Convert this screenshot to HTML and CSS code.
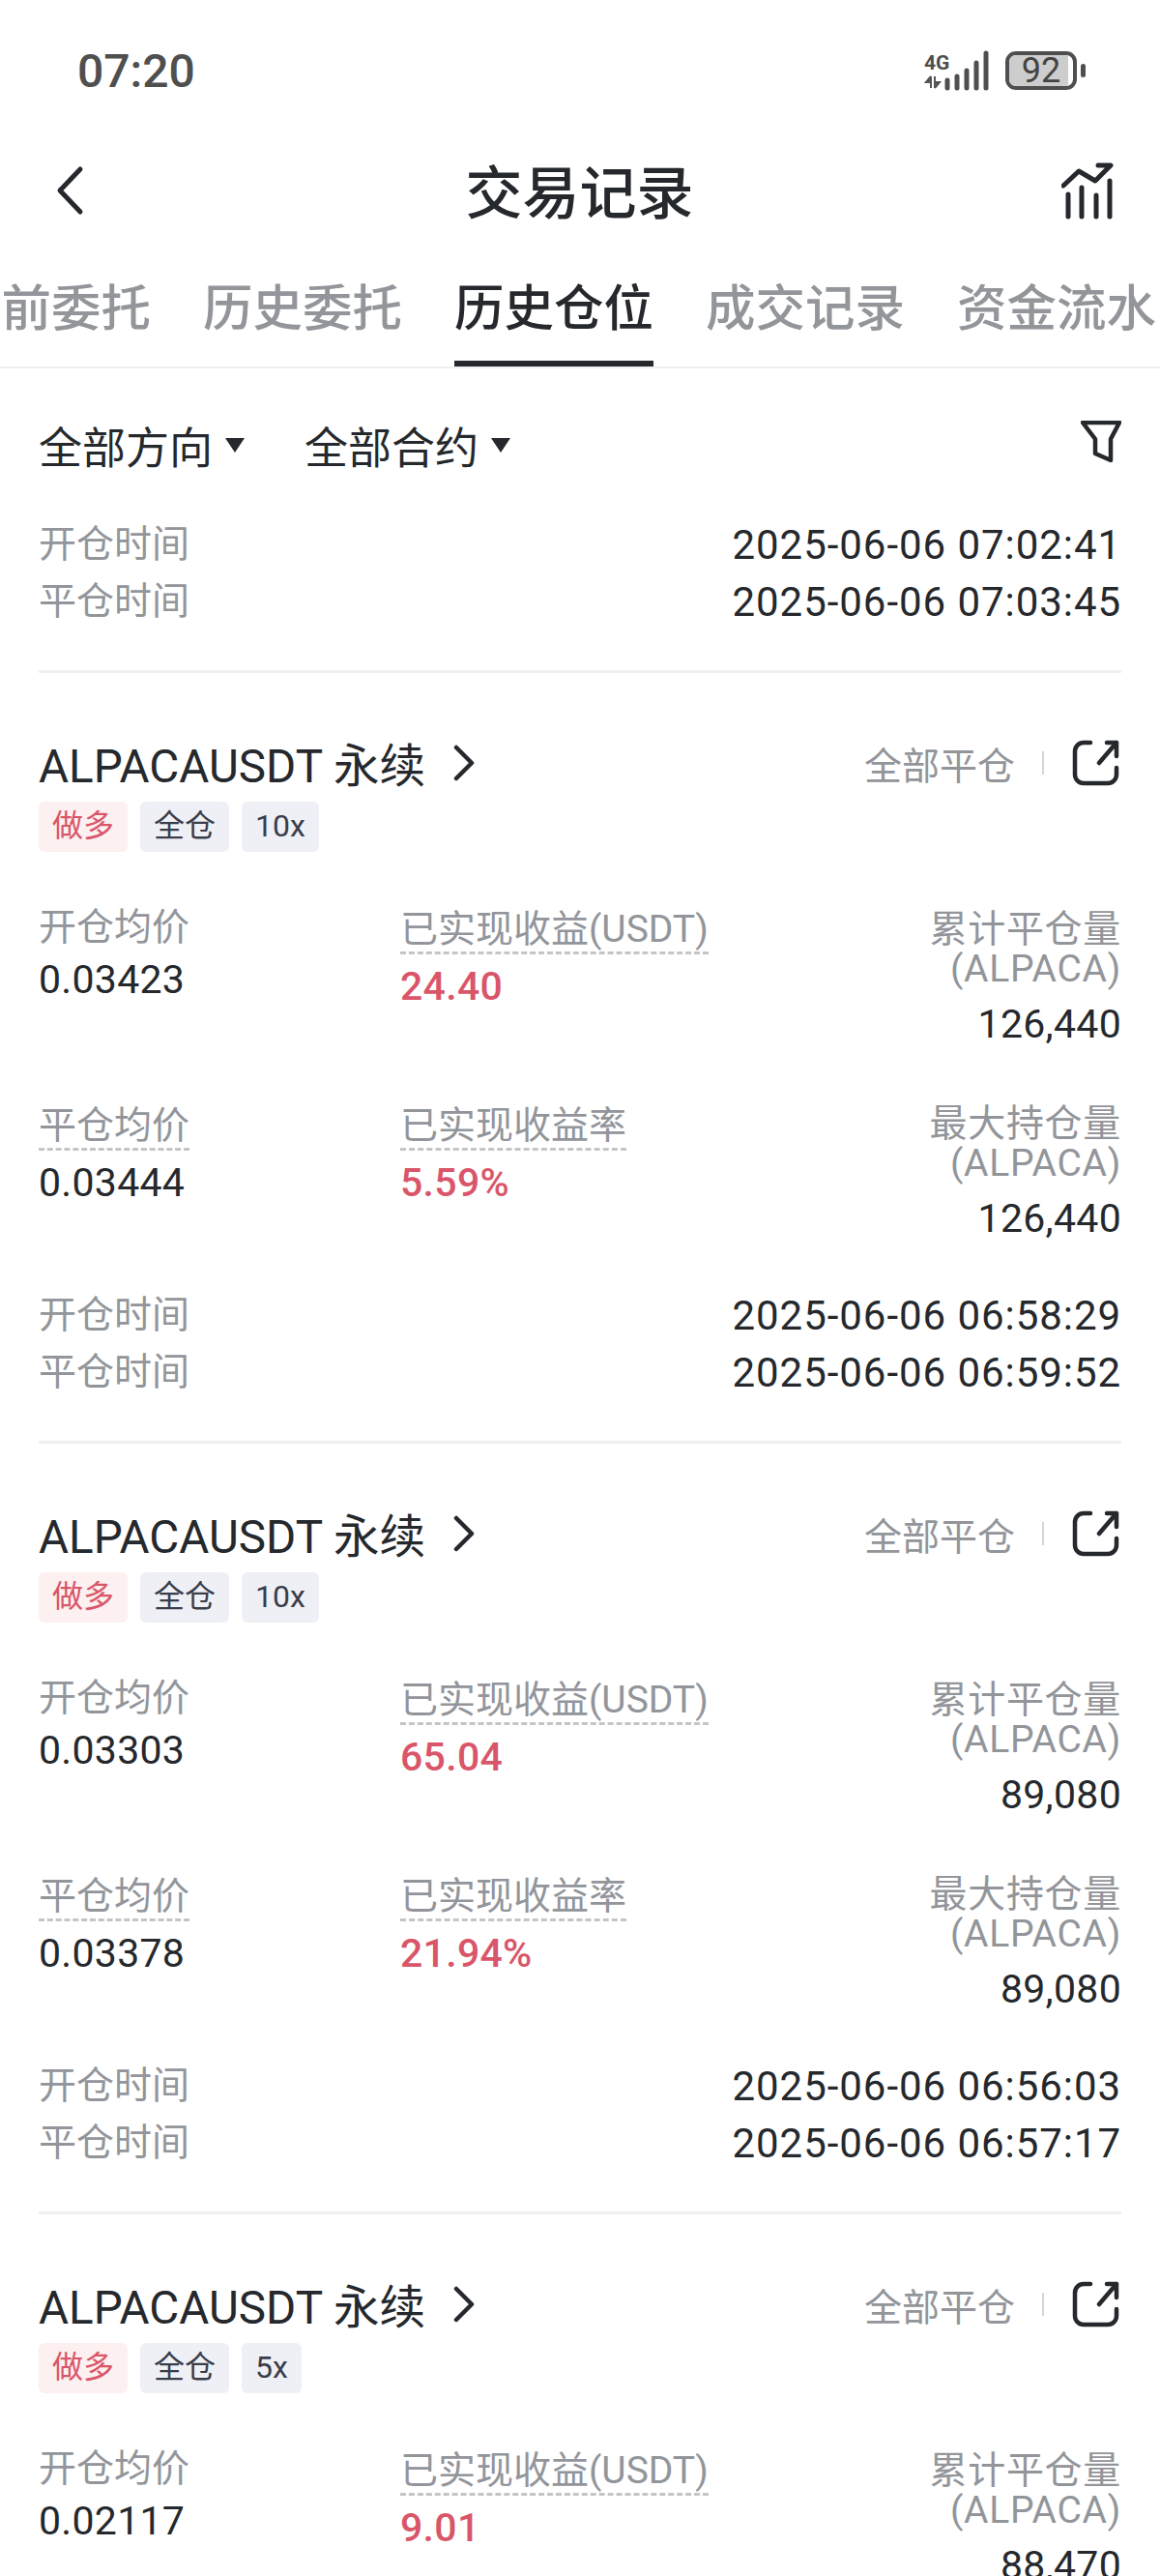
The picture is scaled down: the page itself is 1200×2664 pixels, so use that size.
FILE: index.html
```html
<!DOCTYPE html>
<html lang="zh-CN">
<head>
    <meta charset="UTF-8">
    <title>交易记录</title>
    <link rel="stylesheet" href="styles.css">
</head>
<body>
    <div class="page">
        <div class="statusbar">
            <span class="clock">07:20</span>
            <div class="status-icons">
                <svg class="signal" width="68" height="42" viewBox="0 0 68 42">
                    <text x="0" y="20" class="net">4G</text>
                    <path d="M7 27v12M7 27l-5 6h5M11 27v12M11 39l5-6h-5" fill="#555" stroke="#555" stroke-width="2"/>
                    <g stroke="#4f4f4f" stroke-width="5" stroke-linecap="round">
                        <line x1="24" y1="31" x2="24" y2="39"/>
                        <line x1="34" y1="27" x2="34" y2="39"/>
                        <line x1="44" y1="21" x2="44" y2="39"/>
                        <line x1="54" y1="13" x2="54" y2="39"/>
                        <line x1="64" y1="3" x2="64" y2="39"/>
                    </g>
                </svg>
                <div class="battery"><div class="battery-body"><span class="battery-fill"></span><span class="battery-num">92</span></div><span class="battery-tip"></span></div>
            </div>
        </div>

        <header class="topbar">
            <svg class="back" width="34" height="52" viewBox="0 0 34 52"><path d="M28 4 L7 26 L28 48" fill="none" stroke="#25282c" stroke-width="5" stroke-linecap="round" stroke-linejoin="round"/></svg>
            <h1>交易记录</h1>
            <svg class="chart" width="56" height="60" viewBox="0 0 56 60">
                <g fill="none" stroke="#25282c" stroke-width="5" stroke-linecap="round" stroke-linejoin="round">
                    <path d="M2 24 L18 9 L35 19 L51 3 H38"/>
                    <path d="M7 33V56M21 26V56M36 34V56M50 19V56"/>
                </g>
            </svg>
        </header>

        <nav class="tabs">
            <div class="tab">当前委托</div>
            <div class="tab">历史委托</div>
            <div class="tab active">历史仓位</div>
            <div class="tab">成交记录</div>
            <div class="tab">资金流水</div>
        </nav>

        <div class="filters">
            <div class="filter">全部方向<span class="caret"></span></div>
            <div class="filter">全部合约<span class="caret"></span></div>
            <svg class="funnel" width="42" height="44" viewBox="0 0 42 44"><path d="M2 2H40L31 19V41L15 34V19Z" fill="none" stroke="#25282c" stroke-width="4.5" stroke-linejoin="round"/></svg>
        </div>

        <div class="times first">
            <div class="time-row"><span class="label">开仓时间</span><span class="time">2025-06-06 07:02:41</span></div>
            <div class="time-row"><span class="label">平仓时间</span><span class="time">2025-06-06 07:03:45</span></div>
        </div>

        <section class="card">
            <div class="card-head">
                <div class="symbol">ALPACAUSDT 永续<svg class="next" width="26" height="38" viewBox="0 0 26 38"><path d="M5 3 L21 19 L5 35" fill="none" stroke="#25282c" stroke-width="4.5" stroke-linecap="round" stroke-linejoin="round"/></svg></div>
                <div class="actions">
                    <span class="close-all">全部平仓</span><span class="sep"></span>
                    <svg class="share" width="50" height="50" viewBox="0 0 50 50"><path d="M20 4H13a9 9 0 0 0-9 9V37a9 9 0 0 0 9 9H38a9 9 0 0 0 9-9V30M29 25L47 4M37 4H47V18" fill="none" stroke="#25282c" stroke-width="4.5" stroke-linecap="round" stroke-linejoin="round"/></svg>
                </div>
            </div>
            <div class="tags"><span class="tag long">做多</span><span class="tag">全仓</span><span class="tag">10x</span></div>
            <div class="stats">
                <div class="stat"><div class="label">开仓均价</div><div class="value">0.03423</div></div>
                <div class="stat"><div class="label dotted">已实现收益(USDT)</div><div class="value red">24.40</div></div>
                <div class="stat right"><div class="label">累计平仓量<br>(ALPACA)</div><div class="value">126,440</div></div>
                <div class="stat"><div class="label dotted">平仓均价</div><div class="value">0.03444</div></div>
                <div class="stat"><div class="label dotted">已实现收益率</div><div class="value red">5.59%</div></div>
                <div class="stat right"><div class="label">最大持仓量<br>(ALPACA)</div><div class="value">126,440</div></div>
            </div>
            <div class="times">
                <div class="time-row"><span class="label">开仓时间</span><span class="time">2025-06-06 06:58:29</span></div>
                <div class="time-row"><span class="label">平仓时间</span><span class="time">2025-06-06 06:59:52</span></div>
            </div>
        </section>

        <section class="card">
            <div class="card-head">
                <div class="symbol">ALPACAUSDT 永续<svg class="next" width="26" height="38" viewBox="0 0 26 38"><path d="M5 3 L21 19 L5 35" fill="none" stroke="#25282c" stroke-width="4.5" stroke-linecap="round" stroke-linejoin="round"/></svg></div>
                <div class="actions">
                    <span class="close-all">全部平仓</span><span class="sep"></span>
                    <svg class="share" width="50" height="50" viewBox="0 0 50 50"><path d="M20 4H13a9 9 0 0 0-9 9V37a9 9 0 0 0 9 9H38a9 9 0 0 0 9-9V30M29 25L47 4M37 4H47V18" fill="none" stroke="#25282c" stroke-width="4.5" stroke-linecap="round" stroke-linejoin="round"/></svg>
                </div>
            </div>
            <div class="tags"><span class="tag long">做多</span><span class="tag">全仓</span><span class="tag">10x</span></div>
            <div class="stats">
                <div class="stat"><div class="label">开仓均价</div><div class="value">0.03303</div></div>
                <div class="stat"><div class="label dotted">已实现收益(USDT)</div><div class="value red">65.04</div></div>
                <div class="stat right"><div class="label">累计平仓量<br>(ALPACA)</div><div class="value">89,080</div></div>
                <div class="stat"><div class="label dotted">平仓均价</div><div class="value">0.03378</div></div>
                <div class="stat"><div class="label dotted">已实现收益率</div><div class="value red">21.94%</div></div>
                <div class="stat right"><div class="label">最大持仓量<br>(ALPACA)</div><div class="value">89,080</div></div>
            </div>
            <div class="times">
                <div class="time-row"><span class="label">开仓时间</span><span class="time">2025-06-06 06:56:03</span></div>
                <div class="time-row"><span class="label">平仓时间</span><span class="time">2025-06-06 06:57:17</span></div>
            </div>
        </section>

        <section class="card">
            <div class="card-head">
                <div class="symbol">ALPACAUSDT 永续<svg class="next" width="26" height="38" viewBox="0 0 26 38"><path d="M5 3 L21 19 L5 35" fill="none" stroke="#25282c" stroke-width="4.5" stroke-linecap="round" stroke-linejoin="round"/></svg></div>
                <div class="actions">
                    <span class="close-all">全部平仓</span><span class="sep"></span>
                    <svg class="share" width="50" height="50" viewBox="0 0 50 50"><path d="M20 4H13a9 9 0 0 0-9 9V37a9 9 0 0 0 9 9H38a9 9 0 0 0 9-9V30M29 25L47 4M37 4H47V18" fill="none" stroke="#25282c" stroke-width="4.5" stroke-linecap="round" stroke-linejoin="round"/></svg>
                </div>
            </div>
            <div class="tags"><span class="tag long">做多</span><span class="tag">全仓</span><span class="tag">5x</span></div>
            <div class="stats">
                <div class="stat"><div class="label">开仓均价</div><div class="value">0.02117</div></div>
                <div class="stat"><div class="label dotted">已实现收益(USDT)</div><div class="value red">9.01</div></div>
                <div class="stat right"><div class="label">累计平仓量<br>(ALPACA)</div><div class="value">88,470</div></div>
            </div>
        </section>
    </div>
</body>
</html>
```

FILE: styles.css
```css
* {
    box-sizing: border-box;
}
body {
    margin: 0;
    background: #fff;
    color: #25282c;
    font-family: Roboto, "Noto Sans CJK SC", sans-serif;
}
.page {
    width: 1200px;
    height: 2664px;
    overflow: hidden;
}
.statusbar {
    height: 146px;
    padding: 0 77px 0 80px;
    display: flex;
    justify-content: space-between;
    align-items: center;
}
.clock {
    font-size: 48px;
    font-weight: 500;
    color: #4f4f4f;
}
.status-icons {
    display: flex;
    align-items: center;
    gap: 16px;
}
.net {
    font-size: 21px;
    font-weight: 700;
    fill: #4f4f4f;
}
.battery {
    display: flex;
    align-items: center;
    gap: 4px;
}
.battery-body {
    position: relative;
    width: 74px;
    height: 40px;
    border: 4px solid #4f4f4f;
    border-radius: 11px;
    overflow: hidden;
    text-align: center;
}
.battery-fill {
    position: absolute;
    left: 0;
    top: 0;
    bottom: 0;
    width: 92%;
    background: #cdcdcd;
}
.battery-num {
    position: relative;
    font-size: 36px;
    line-height: 32px;
    color: #444;
    display: block;
}
.battery-tip {
    width: 5px;
    height: 14px;
    border-radius: 3px;
    background: #4f4f4f;
}
.topbar {
    height: 110px;
    padding: 0 46px 0 55px;
    display: flex;
    justify-content: space-between;
    align-items: center;
}
.topbar h1 {
    margin: 0 0 0 12px;
    font-size: 59px;
    font-weight: 500;
    line-height: 100px;
}
.back {
    margin-top: -8px;
}
.chart {
    margin-top: -6px;
}
.tabs {
    height: 125px;
    margin-left: -50px;
    display: flex;
    gap: 54px;
    align-items: flex-start;
    border-bottom: 2px solid #f0f0f0;
    width: 1250px;
}
.tab {
    flex: none;
    width: 206px;
    height: 117px;
    padding-top: 29px;
    font-size: 51.5px;
    line-height: 70px;
    font-weight: 500;
    color: #92959a;
    white-space: nowrap;
}
.tab.active {
    height: 123px;
    color: #25282c;
    border-bottom: 6px solid #25282c;
}
.filters {
    height: 153px;
    padding: 7px 40px 2px;
    display: flex;
    align-items: center;
    gap: 62px;
}
.filter {
    font-size: 45px;
    display: flex;
    align-items: center;
    gap: 13px;
}
.caret {
    width: 0;
    height: 0;
    border-left: 10px solid transparent;
    border-right: 10px solid transparent;
    border-top: 15px solid #25282c;
}
.funnel {
    margin-left: auto;
    margin-top: -6px;
}
.label {
    font-size: 39px;
    line-height: 41px;
    color: #92959a;
}
.times {
    height: 163px;
    border-bottom: 3px solid #f0f0f0;
    margin: 0 40px;
}
.times.first {
    height: 162px;
}
.time-row {
    display: flex;
    justify-content: space-between;
    align-items: center;
    height: 59px;
}
.time {
    font-size: 42px;
    letter-spacing: 0.95px;
}
.card {
    padding: 0 40px;
}
.card .times {
    margin: 0;
    padding-top: 1px;
}
.card-head {
    height: 133px;
    padding-top: 52px;
    display: flex;
    justify-content: space-between;
    align-items: center;
}
.symbol {
    font-size: 47.6px;
    display: flex;
    align-items: center;
    gap: 27px;
}
.actions {
    display: flex;
    align-items: center;
}
.close-all {
    font-size: 39px;
    color: #92959a;
}
.sep {
    width: 2px;
    height: 24px;
    margin: 0 28px;
    background: #d5d6d8;
}
.share {
    margin-right: 2px;
}
.tags {
    display: flex;
    gap: 13px;
    height: 52px;
}
.tag {
    padding: 0 14px;
    height: 52px;
    line-height: 50px;
    font-size: 32px;
    border-radius: 6px;
    background: #eff0f5;
    color: #3a3d4a;
}
.tag.long {
    background: #fdf0f0;
    color: #d9566a;
}
.stats {
    display: grid;
    grid-template-columns: 374px 1fr auto;
    grid-template-rows: 203px 188px;
    margin-top: 58px;
}
.stat.right {
    padding-top: 2px;
    text-align: right;
}
.stat.right .label {
    letter-spacing: 0.7px;
}
.stat.right:nth-child(6) {
    margin-top: -2px;
}
.dotted {
    display: inline-block;
    margin-top: 2px;
    padding-bottom: 2px;
    border-bottom: 3px dashed #c4c5c8;
}
.value {
    font-size: 41px;
    line-height: 48px;
    letter-spacing: 0.3px;
    margin-top: 9px;
}
.dotted + .value {
    margin-top: 9px;
}
.value.red {
    color: #d9566a;
    font-weight: 500;
}
.stat.right .value {
    margin-top: 12px;
}
```
